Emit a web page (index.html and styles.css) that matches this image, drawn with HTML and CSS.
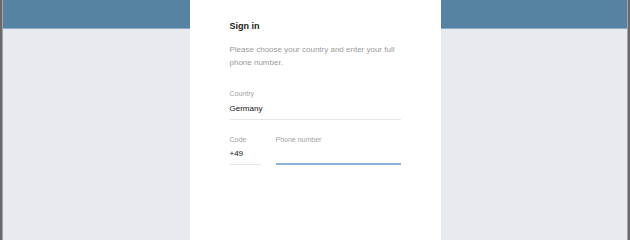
FILE: index.html
```html
<!DOCTYPE html>
<html lang="en">
<head>
<meta charset="utf-8">
<title>Sign in</title>
<link rel="stylesheet" href="styles.css">
</head>
<body>
<div class="window">
  <div class="page">
    <div class="card">
      <h1 class="title">Sign in</h1>
      <p class="desc">Please choose your country and enter your full phone number.</p>
      <div class="field">
        <div class="label">Country</div>
        <div class="value">Germany</div>
      </div>
      <div class="row">
        <div class="field code">
          <div class="label">Code</div>
          <div class="value">+49</div>
        </div>
        <div class="field phone">
          <div class="label">Phone number</div>
          <div class="value">&nbsp;</div>
        </div>
      </div>
    </div>
  </div>
</div>
</body>
</html>
```
FILE: styles.css
```css
html, body {
  margin: 0;
  padding: 0;
  height: 100%;
  overflow: hidden;
  background: #e7ebf0;
  font-family: "Liberation Sans", Arial, sans-serif;
}

.window {
  width: 630px;
  height: 100vh;
  min-height: 200px;
  box-sizing: border-box;
  border-left: 2px solid #6a6a6a;
  border-right: 2px solid #6a6a6a;
  overflow: hidden;
}

.page {
  height: 100%;
  box-sizing: border-box;
  border-left: 1px solid #a4a4a4;
  border-right: 1px solid #a4a4a4;
  background: linear-gradient(to bottom, #5682a3 0, #5682a3 28px, #8eaac2 28px, #8eaac2 29px, #e7ebf0 29px);
}

.card {
  width: 171px;
  height: calc(100% - 20px);
  margin: 0 auto;
  padding: 20px 40px 0;
  background: #fff;
  box-sizing: content-box;
}

.title {
  margin: 0;
  font-size: 9px;
  line-height: 13px;
  font-weight: bold;
  color: #1a1a1a;
}

.desc {
  margin: 11px 0 0;
  font-size: 8px;
  line-height: 12.5px;
  color: #9a9a9a;
}

.field {
  margin-top: 20px;
  padding-bottom: 5px;
  border-bottom: 1px solid #e6e6e6;
}

.label {
  font-size: 7px;
  line-height: 9px;
  color: #a3a3a3;
}

.value {
  margin-top: 5.5px;
  font-size: 8px;
  line-height: 10px;
  color: #111;
}

.row {
  display: flex;
  gap: 15px;
  margin-top: 15px;
}

.row .field {
  margin-top: 0;
}

.code {
  width: 31px;
}

.phone {
  flex: 1;
  padding-bottom: 4px;
  border-bottom: 2px solid #8bb4dd;
}
```
